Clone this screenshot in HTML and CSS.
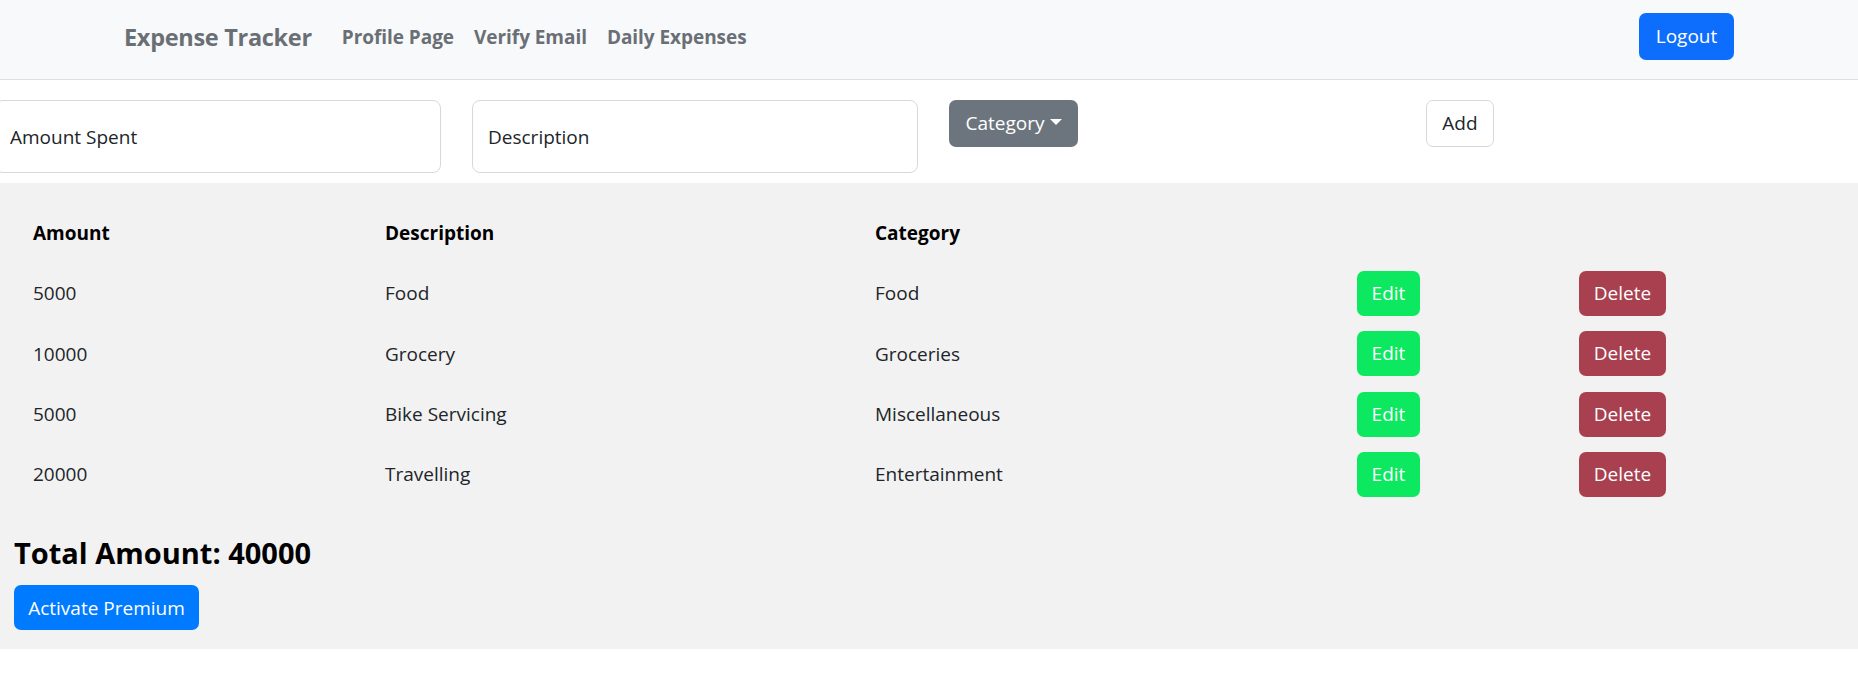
FILE: index.html
```html
<!DOCTYPE html>
<html lang="en">
<head>
<meta charset="utf-8">
<title>Expense Tracker</title>
<link rel="stylesheet" href="styles.css">
</head>
<body>
<nav class="navbar">
  <div class="nav-inner">
    <a class="brand" href="#">Expense Tracker</a>
    <a class="nav-link" href="#">Profile Page</a>
    <a class="nav-link" href="#">Verify Email</a>
    <a class="nav-link" href="#">Daily Expenses</a>
    <button class="btn btn-logout">Logout</button>
  </div>
</nav>

<form class="entry-form">
  <div class="col"><input class="field" type="text" placeholder="Amount Spent"></div>
  <div class="col"><input class="field" type="text" placeholder="Description"></div>
  <div class="col"><button type="button" class="btn btn-category">Category<span class="caret"></span></button></div>
  <div class="col"><button type="button" class="btn btn-add">Add</button></div>
</form>

<section class="expenses">
  <table class="expense-table">
    <thead>
      <tr><th class="c-amount">Amount</th><th class="c-desc">Description</th><th class="c-cat">Category</th><th class="c-edit"></th><th></th></tr>
    </thead>
    <tbody>
      <tr><td>5000</td><td>Food</td><td>Food</td><td><button class="btn btn-edit">Edit</button></td><td><button class="btn btn-delete">Delete</button></td></tr>
      <tr><td>10000</td><td>Grocery</td><td>Groceries</td><td><button class="btn btn-edit">Edit</button></td><td><button class="btn btn-delete">Delete</button></td></tr>
      <tr><td>5000</td><td>Bike Servicing</td><td>Miscellaneous</td><td><button class="btn btn-edit">Edit</button></td><td><button class="btn btn-delete">Delete</button></td></tr>
      <tr><td>20000</td><td>Travelling</td><td>Entertainment</td><td><button class="btn btn-edit">Edit</button></td><td><button class="btn btn-delete">Delete</button></td></tr>
    </tbody>
  </table>
  <h3 class="total">Total Amount: 40000</h3>
  <button class="btn btn-premium">Activate Premium</button>
</section>
</body>
</html>
```

FILE: styles.css
```css
* { box-sizing: border-box; }

html, body {
  margin: 0;
  padding: 0;
  background: #ffffff;
  font-family: "Open Sans", "Noto Sans", sans-serif;
  color: #212529;
  overflow: hidden;
}

.navbar {
  background: #f8f9fa;
  border-bottom: 1px solid #dcdfe2;
  height: 80px;
}

.nav-inner {
  display: flex;
  align-items: center;
  height: 73px;
  padding-left: 124px;
  padding-right: 124px;
}

.brand {
  font-size: 23.5px;
  font-weight: 700;
  color: #6a6f76;
  text-decoration: none;
  margin-right: 20px;
  letter-spacing: -0.3px;
}

.nav-link {
  font-size: 19px;
  font-weight: 700;
  color: #6a6f76;
  text-decoration: none;
  padding: 0 10px;
  letter-spacing: -0.05px;
}

.btn {
  font-family: inherit;
  border: 1px solid transparent;
  border-radius: 7px;
  font-size: 19px;
  line-height: 1.5;
  cursor: pointer;
  color: #ffffff;
}

.btn-logout {
  margin-left: auto;
  background: #0d6efd;
  width: 95px;
  height: 47px;
  margin-top: -1px;
  padding: 0;
}

.entry-form {
  display: grid;
  grid-template-columns: repeat(4, 446px);
  column-gap: 31px;
  margin: 20px 0 10px -5px;
  align-items: start;
}

.field {
  width: 446px;
  height: 73px;
  border: 1px solid #d6d9dc;
  border-radius: 8px;
  padding: 0 15px;
  font-family: inherit;
  font-size: 19px;
  color: #212529;
  background: #ffffff;
}

.field::placeholder {
  color: #212529;
  opacity: 1;
}

.col:first-child .field {
  padding-left: 14px;
}

.btn-category {
  background: #6c757d;
  height: 47px;
  width: 129px;
  padding: 0;
  display: inline-flex;
  align-items: center;
  justify-content: center;
}

.caret {
  display: inline-block;
  margin-left: 5px;
  border-top: 6px solid #ffffff;
  border-left: 6px solid transparent;
  border-right: 6px solid transparent;
  transform: translateY(-2px);
}

.btn-add {
  background: #ffffff;
  color: #212529;
  border: 1px solid #d6d9dc;
  height: 47px;
  width: 68px;
  padding: 0;
}

.expenses {
  background: #f2f2f2;
  padding: 20px 0 19px 14px;
}

.expense-table {
  border-collapse: collapse;
  font-size: 19px;
  color: #212529;
}

.expense-table th {
  text-align: left;
  font-weight: 700;
  color: #000000;
}

.expense-table th,
.expense-table td {
  height: 60.3px;
  padding: 0;
  vertical-align: middle;
}

.expense-table th:first-child,
.expense-table td:first-child {
  padding-left: 19px;
}

.c-amount { width: 371px; }
.c-desc { width: 490px; }
.c-cat { width: 482px; }
.c-edit { width: 222px; }

.btn-edit {
  background: #0ce85f;
  height: 45px;
  width: 63px;
  padding: 0;
}

.btn-delete {
  background: #a8404f;
  height: 45px;
  width: 87px;
  padding: 0;
}

.total {
  font-size: 29px;
  font-weight: 700;
  color: #000000;
  margin: 31px 0 15px 0;
  line-height: 35px;
  letter-spacing: 0;
}

.btn-premium {
  background: #007bff;
  height: 45px;
  width: 185px;
  padding: 0;
  display: block;
}
```
